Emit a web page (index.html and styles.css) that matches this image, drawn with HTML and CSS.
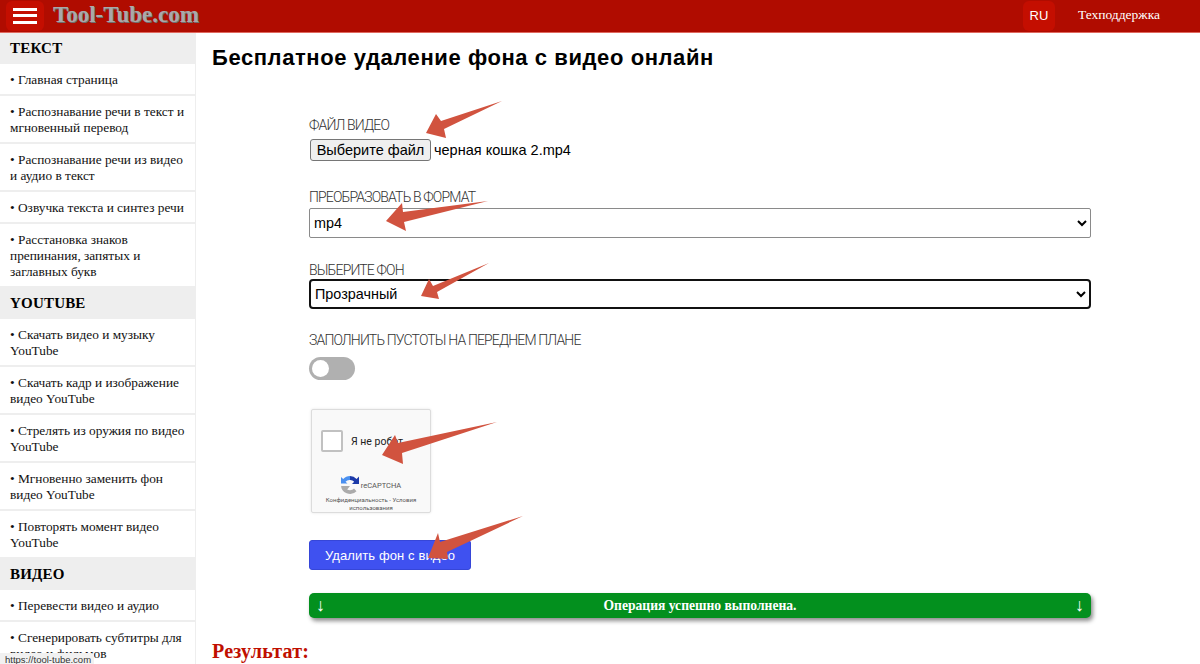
FILE: index.html
```html
<!DOCTYPE html>
<html lang="ru">
<head>
<meta charset="utf-8">
<title>Tool-Tube</title>
<link rel="stylesheet" href="styles.css">
</head>
<body>
<header class="topbar">
  <div class="burger"><span></span><span></span><span></span></div>
  <div class="logo">Tool-Tube.com</div>
  <div class="spacer"></div>
  <div class="lang">RU</div>
  <div class="support">Техподдержка</div>
</header>
<div class="layout">
  <nav class="sidebar">
    <div class="sec">ТЕКСТ</div>
    <a class="item">• Главная страница</a>
    <a class="item">• Распознавание речи в текст и мгновенный перевод</a>
    <a class="item">• Распознавание речи из видео и аудио в текст</a>
    <a class="item">• Озвучка текста и синтез речи</a>
    <a class="item">• Расстановка знаков препинания, запятых и заглавных букв</a>
    <div class="sec">YOUTUBE</div>
    <a class="item">• Скачать видео и музыку YouTube</a>
    <a class="item">• Скачать кадр и изображение видео YouTube</a>
    <a class="item">• Стрелять из оружия по видео YouTube</a>
    <a class="item">• Мгновенно заменить фон видео YouTube</a>
    <a class="item">• Повторять момент видео YouTube</a>
    <div class="sec">ВИДЕО</div>
    <a class="item">• Перевести видео и аудио</a>
    <a class="item">• Сгенерировать субтитры для видео и фильмов</a>
  </nav>
  <main class="content">
    <h1 class="title">Бесплатное удаление фона с видео онлайн</h1>
    <form class="form">
      <label class="lbl lbl-file">ФАЙЛ ВИДЕО</label>
      <div class="filerow"><button type="button" class="filebtn">Выберите файл</button><span class="filename">черная кошка 2.mp4</span></div>
      <label class="lbl lbl-format">ПРЕОБРАЗОВАТЬ В ФОРМАТ</label>
      <select class="sel"><option>mp4</option></select>
      <label class="lbl lbl-bg">ВЫБЕРИТЕ ФОН</label>
      <select class="sel sel-focus"><option>Прозрачный</option></select>
      <label class="lbl lbl-fill">ЗАПОЛНИТЬ ПУСТОТЫ НА ПЕРЕДНЕМ ПЛАНЕ</label>
      <div class="toggle"><div class="knob"></div></div>
      <div class="captcha">
        <div class="cap-top"><div class="cap-box"></div><div class="cap-text">Я не робот</div></div>
        <div class="cap-logo">
          <svg class="cap-icon" viewBox="0 0 20 20" width="20" height="20">
            <path d="M10 1a9 9 0 0 1 6.600 2.900L19 1.500V9h-7l2.200-2.200A5.200 5.200 0 0 0 10 5z" fill="#1c3aa9"/>
            <path d="M10 1a9 9 0 0 0-6.800 3.100L1 2v6.500h6.500L5.500 6.800A5.200 5.200 0 0 1 10 5z" fill="#4a90f0"/>
            <path d="M1 10a9 9 0 0 0 15.500 6.200l-2.500-2.700c-1 1-2.500 1.700-4 1.700-1 0-2-.3-2.800-.8L10 11H1z" fill="#ababab"/>
          </svg>
          <span class="cap-name">reCAPTCHA</span>
        </div>
        <div class="cap-links">Конфиденциальность - Условия использования</div>
      </div>
      <button type="button" class="submit">Удалить фон с видео</button>
      <div class="success"><span class="arrow">↓</span><span class="msg">Операция успешно выполнена.</span><span class="arrow">↓</span></div>
    </form>
    <h2 class="result">Результат:</h2>
  </main>
</div>
<svg class="marks" width="1200" height="664" viewBox="0 0 1200 664">
  <g fill="#d1533f">
    <path d="M502 101L441 121L436 114L426 133L446 138L444 129z"/>
    <path d="M488 201L403 212L402 203L386 221L406 231L404 222z"/>
    <path d="M489 263L433 286L429 279L421 296L439 299L437 292z"/>
    <path d="M497 422L398 443L395 435L382 455L403 464L402 453z"/>
    <path d="M523 516L440 542L438 533L428 558L448 559L447 552z"/>
  </g>
</svg>
<div class="status">https://tool-tube.com</div>
</body>
</html>
```
FILE: styles.css
```css
* { box-sizing: border-box; }
html, body { margin: 0; padding: 0; height: 664px; overflow: hidden; background: #fff; }
body { font-family: "Liberation Sans", Arial, sans-serif; color: #000; position: relative; }

.topbar { height: 33px; background: #b00c00; border-bottom: 1px solid #e0695f; display: flex; align-items: center; padding-left: 6px; }
.burger { width: 38px; height: 30px; background: #c40e00; border-radius: 6px; display: flex; flex-direction: column; justify-content: center; gap: 3.500px; padding: 0 7px; margin-top: -1px; }
.burger span { display: block; height: 3px; background: #fff; }
.logo { font-family: "Liberation Serif", serif; font-weight: bold; font-size: 23px; color: #a9a9a9; text-shadow: 1px 1px 0 #6f6f6f; margin-left: 9px; margin-top: -2px; }
.spacer { flex: 1; }
.lang { width: 32px; height: 30px; background: #c40e00; border-radius: 6px; color: #fff; font-size: 13px; display: flex; align-items: center; justify-content: center; margin-top: -1px; }
.support { font-family: "Liberation Serif", serif; font-size: 13.500px; color: #fff; margin-left: 23px; margin-right: 40px; margin-top: -2px; }

.layout { display: flex; height: 631px; }
.sidebar { width: 196px; flex: none; border-right: 1px solid #eee; overflow: hidden; font-family: "Liberation Serif", serif; }
.sec { height: 31px; background: #eee; font-weight: bold; font-size: 15px; line-height: 31px; padding-left: 10px; letter-spacing: 0.200px; }
.item { display: block; padding: 8px 10px 6px; font-size: 13.330px; line-height: 16px; border-bottom: 2px solid #eee; color: #111; }

.content { flex: 1; padding-left: 16px; }
.title { margin: 0; font-size: 22px; line-height: 26px; padding-top: 12px; font-weight: bold; letter-spacing: 0.580px; color: #000; }
.form { margin-left: 97px; width: 782px; display: flex; flex-direction: column; align-items: flex-start; }
.lbl { font-family: Roboto, sans-serif; font-weight: 300; font-size: 14px; line-height: 16px; color: #333; letter-spacing: -0.850px; }
.lbl-file { margin-top: 46px; }
.lbl-format { margin-top: 28px; }
.lbl-bg { margin-top: 24px; }
.lbl-fill { margin-top: 23px; }
.filerow { display: flex; align-items: center; margin-top: 6px; margin-left: 1px; }
.filebtn { width: 121px; height: 22px; padding: 0; font: 14.500px "Liberation Sans", sans-serif; color: #000; background: #efefef; border: 1px solid #767676; border-radius: 3px; }
.filename { font-size: 14.500px; margin-left: 3px; }
.sel { display: block; width: 782px; height: 30px; margin-top: 3px; font: 14.400px "Liberation Sans", sans-serif; padding-left: 0; background: #fff; color: #000; border: 1px solid #8a8a8a; border-radius: 2px; }
.sel-focus { margin-top: 1px; border: 2px solid #111; border-radius: 4px; }
.toggle { width: 46px; height: 23px; margin-top: 9px; background: #b0b0b0; border-radius: 12px; padding: 3px 0 0 3px; }
.knob { width: 17px; height: 17px; background: #fff; border-radius: 50%; }

.captcha { width: 120px; height: 104px; margin: 29px 0 0 2px; background: #f9f9f9; border: 1px solid #dcdcdc; border-radius: 2px; box-shadow: 0 0 3px rgba(0,0,0,.1); display: flex; flex-direction: column; align-items: center; overflow: hidden; }
.cap-top { display: flex; align-items: center; width: 100%; padding: 20px 0 0 9px; }
.cap-box { width: 22px; height: 22px; background: #fff; border: 2px solid #c1c1c1; border-radius: 2px; flex: none; }
.cap-text { font-family: Roboto, sans-serif; font-size: 10.500px; color: #222; margin-left: 8px; }
.cap-logo { display: flex; align-items: center; margin-top: 23px; }
.cap-icon { margin-left: -1px; }
.cap-name { font-family: Roboto, sans-serif; font-size: 7.500px; color: #555; margin-left: 1px; }
.cap-links { font-family: Roboto, sans-serif; font-size: 6px; line-height: 8px; color: #555; text-align: center; margin-top: 1px; padding: 0 8px; }

.submit { width: 162px; height: 30px; margin-top: 27px; background: #3f51f0; color: #fff; border: 1px solid #3646d8; border-radius: 3px; font: 13px "Liberation Sans", sans-serif; padding: 0; letter-spacing: 0.100px; }
.success { width: 782px; height: 25px; margin-top: 23px; background: #03901e; border-radius: 5px; box-shadow: 2px 3px 4px rgba(0,0,0,.45); display: flex; align-items: center; justify-content: space-between; padding: 0 7px; color: #fff; font-family: "Liberation Serif", serif; font-weight: bold; font-size: 13.600px; }
.arrow { font-weight: normal; font-size: 18px; }
.result { margin: 21px 0 0; font-family: "Liberation Serif", serif; font-size: 20px; line-height: 24px; color: #c00f00; font-weight: bold; letter-spacing: 0.200px; }

.marks { position: absolute; left: 0; top: 0; pointer-events: none; }
.status { position: absolute; left: 0; bottom: 0; height: 11px; width: 94px; background: #f1f1f1; border-top-right-radius: 3px; font-size: 9.500px; line-height: 14px; padding-left: 5px; color: #333; overflow: hidden; }
```
